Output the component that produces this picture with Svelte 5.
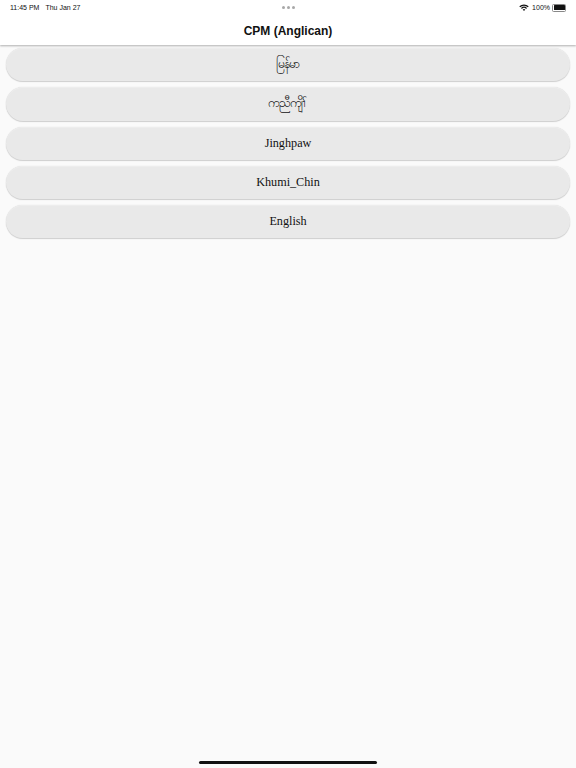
<script>
  const languages = ["မြန်မာ", "ကညီကျိၢ်", "Jinghpaw", "Khumi_Chin", "English"];
</script>

<div class="page">
  <header>
    <div class="status">
      <span class="time">11:45 PM</span>
      <span class="date">Thu Jan 27</span>
      <span class="dots"><i></i><i></i><i></i></span>
      <span class="right">
        <svg class="wifi" width="10" height="7" viewBox="0 0 10 7">
          <path d="M0.3 2.3A6.8 6.8 0 0 1 9.7 2.3L8.8 3.2A5.5 5.5 0 0 0 1.2 3.2Z" />
          <path d="M2 4A4.3 4.3 0 0 1 8 4L7.1 4.9A3 3 0 0 0 2.9 4.9Z" />
          <path d="M3.7 5.6A1.9 1.9 0 0 1 6.3 5.6L5 7Z" />
        </svg>
        <span class="pct">100%</span>
        <span class="battery"><b></b></span>
      </span>
    </div>
    <h1>CPM (Anglican)</h1>
  </header>

  <main>
    {#each languages as lang}
      <button>{lang}</button>
    {/each}
  </main>

  <div class="home"></div>
</div>

<style>
  :global(body) {
    margin: 0;
    background: #fafafa;
  }
  .page {
    position: relative;
    height: 768px;
    overflow: hidden;
    background: #fafafa;
  }
  header {
    height: 45px;
    background: #fff;
    box-shadow: 0 1px 2px rgba(0, 0, 0, 0.3);
    display: flex;
    flex-direction: column;
    position: relative;
    z-index: 1;
  }
  .status {
    display: flex;
    align-items: center;
    height: 13px;
    padding: 1px 10px 0;
    font: 7px "Liberation Sans", sans-serif;
    color: #111;
    position: relative;
  }
  .date {
    margin-left: 6px;
  }
  .dots {
    position: absolute;
    left: 282px;
    top: 6px;
    display: flex;
    gap: 2px;
  }
  .dots i {
    width: 3px;
    height: 3px;
    border-radius: 50%;
    background: #a8a8a8;
  }
  .right {
    margin-left: auto;
    display: flex;
    align-items: center;
  }
  .wifi {
    fill: #111;
    margin-right: 3px;
  }
  .battery {
    margin-left: 2px;
    width: 11px;
    height: 5px;
    padding: 0.5px;
    border: 0.5px solid #888;
    border-radius: 1.5px;
    display: flex;
  }
  .battery b {
    flex: 1;
    background: #111;
    border-radius: 0.5px;
  }
  h1 {
    margin: 0;
    padding-top: 8px;
    text-align: center;
    font: 700 12px/18px "Liberation Sans", sans-serif;
    color: #111;
  }
  main {
    display: flex;
    flex-direction: column;
    gap: 6px;
    padding: 3px 6px 0;
  }
  button {
    height: 33.3px;
    padding: 0;
    border: 0;
    border-radius: 17px;
    background: #e9e9e9;
    box-shadow: 0 1px 1px #cfcfcf, 0 0 1px #d4d4d4, inset 0 1px 0 #ededed;
    font: 12.2px "Liberation Serif", "Noto Sans", serif;
    color: #111;
  }
  .home {
    position: absolute;
    left: 199px;
    bottom: 4px;
    width: 178px;
    height: 3px;
    border-radius: 2px;
    background: #111;
  }
</style>
